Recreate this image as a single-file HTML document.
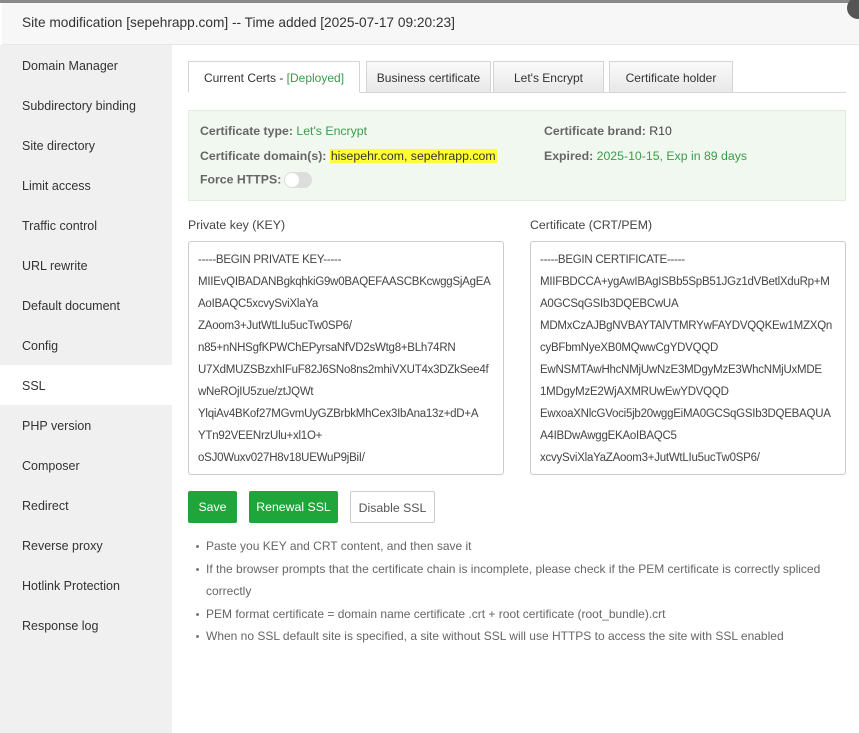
<!DOCTYPE html>
<html><head><meta charset="utf-8"><style>
*{box-sizing:border-box;margin:0;padding:0}
body{width:859px;height:733px;overflow:hidden;background:#fff;font-family:"Liberation Sans",sans-serif;color:#555;font-size:12px;position:relative}
.topbar{position:absolute;left:0;top:0;width:859px;height:3px;background:#8a8a8a}
.head{position:absolute;left:2px;top:3px;width:857px;height:42px;background:#f7f7f7;border-bottom:1px solid #e6e6e6;font-size:13.7px;color:#333;padding:12px 0 0 20px}
.close{position:absolute;right:-10px;top:-6px;width:22px;height:22px;border-radius:50%;background:#555}
.side{position:absolute;left:0;top:45px;width:172px;height:688px;background:#f0f0f0}
.side div{height:40px;line-height:42px;padding-left:22px;font-size:12.5px;color:#333}
.side .act{background:#fff}
.tab{position:absolute;top:61px;height:32px;border:1px solid #d5d5d5;background:linear-gradient(#fafafa,#e8e8e8);text-align:center;line-height:32px;font-size:12px;color:#333}
.tab.a{background:#fff;border-bottom-color:#fff;height:32px}
.line{position:absolute;left:188px;top:92px;width:658px;height:1px;background:#d5d5d5}
.box{position:absolute;left:188px;top:110px;width:658px;height:91px;background:#f1f8ef;border:1px solid #e2ede0}
.l{position:absolute;font-size:12.3px;color:#666;white-space:nowrap}
.l b{color:#666}
.g{color:#3d9a4b}
.hl{background:#ffff33;color:#333;padding:0 1px}
.tog{display:inline-block;width:28px;height:16px;border-radius:8px;background:#ddd;vertical-align:middle;position:relative;margin-left:3px}
.tog:after{content:"";position:absolute;left:1px;top:1px;width:14px;height:14px;border-radius:50%;background:#fff}
.ta{position:absolute;top:241px;width:316px;height:234px;border:1px solid #ccc;border-radius:3px;padding:7px 0 0 9px;font-size:11.5px;letter-spacing:-0.25px;line-height:22px;color:#444;white-space:nowrap;overflow:hidden}
.btn{position:absolute;top:491px;height:32px;line-height:32px;text-align:center;border-radius:2px;font-size:12.3px}
.gr{background:#20a53a;color:#fff}
ul{position:absolute;left:206px;top:535px;list-style:none;width:640px}
li{font-size:12px;line-height:22.5px;color:#666;position:relative}
li:before{content:"";position:absolute;left:-10px;top:10px;width:3px;height:3px;border-radius:50%;background:#777}
</style></head><body>
<div class="topbar"></div>
<div class="head">Site modification [sepehrapp.com] -- Time added [2025-07-17 09:20:23]<div class="close"></div></div>
<div class="side">
<div>Domain Manager</div><div>Subdirectory binding</div><div>Site directory</div><div>Limit access</div><div>Traffic control</div><div>URL rewrite</div><div>Default document</div><div>Config</div><div class="act">SSL</div><div>PHP version</div><div>Composer</div><div>Redirect</div><div>Reverse proxy</div><div>Hotlink Protection</div><div>Response log</div>
</div>
<div class="line"></div>
<div class="tab a" style="left:188px;width:172px">Current Certs - <span class="g">[Deployed]</span></div>
<div class="tab" style="left:366px;width:125px">Business certificate</div>
<div class="tab" style="left:493px;width:111px">Let's Encrypt</div>
<div class="tab" style="left:609px;width:124px">Certificate holder</div>
<div class="box"></div>
<div class="l" style="left:200px;top:124px"><b>Certificate type:</b> <span class="g">Let's Encrypt</span></div>
<div class="l" style="left:200px;top:149px"><b>Certificate domain(s):</b> <span class="hl">hisepehr.com, sepehrapp.com</span></div>
<div class="l" style="left:200px;top:172px"><b>Force HTTPS:</b><span class="tog"></span></div>
<div class="l" style="left:544px;top:124px"><b>Certificate brand:</b> <span style="color:#444">R10</span></div>
<div class="l" style="left:544px;top:149px"><b>Expired:</b> <span class="g">2025-10-15, Exp in 89 days</span></div>
<div class="l" style="left:188px;top:218px;color:#444">Private key (KEY)</div>
<div class="l" style="left:530px;top:218px;color:#444">Certificate (CRT/PEM)</div>
<div class="ta" style="left:188px">-----BEGIN PRIVATE KEY-----<br>MIIEvQIBADANBgkqhkiG9w0BAQEFAASCBKcwggSjAgEA<br>AoIBAQC5xcvySviXlaYa<br>ZAoom3+JutWtLIu5ucTw0SP6/<br>n85+nNHSgfKPWChEPyrsaNfVD2sWtg8+BLh74RN<br>U7XdMUZSBzxhIFuF82J6SNo8ns2mhiVXUT4x3DZkSee4f<br>wNeROjIU5zue/ztJQWt<br>YlqiAv4BKof27MGvmUyGZBrbkMhCex3IbAna13z+dD+A<br>YTn92VEENrzUlu+xl1O+<br>oSJ0Wuxv027H8v18UEWuP9jBiI/</div>
<div class="ta" style="left:530px">-----BEGIN CERTIFICATE-----<br>MIIFBDCCA+ygAwIBAgISBb5SpB51JGz1dVBetlXduRp+M<br>A0GCSqGSIb3DQEBCwUA<br>MDMxCzAJBgNVBAYTAlVTMRYwFAYDVQQKEw1MZXQn<br>cyBFbmNyeXB0MQwwCgYDVQQD<br>EwNSMTAwHhcNMjUwNzE3MDgyMzE3WhcNMjUxMDE<br>1MDgyMzE2WjAXMRUwEwYDVQQD<br>EwxoaXNlcGVoci5jb20wggEiMA0GCSqGSIb3DQEBAQUA<br>A4IBDwAwggEKAoIBAQC5<br>xcvySviXlaYaZAoom3+JutWtLIu5ucTw0SP6/</div>
<div class="btn gr" style="left:188px;width:49px">Save</div>
<div class="btn gr" style="left:249px;width:89px">Renewal SSL</div>
<div class="btn" style="left:350px;width:85px;border:1px solid #ccc;color:#555">Disable SSL</div>
<ul>
<li>Paste you KEY and CRT content, and then save it</li>
<li>If the browser prompts that the certificate chain is incomplete, please check if the PEM certificate is correctly spliced correctly</li>
<li>PEM format certificate = domain name certificate .crt + root certificate (root_bundle).crt</li>
<li>When no SSL default site is specified, a site without SSL will use HTTPS to access the site with SSL enabled</li>
</ul>
</body></html>
